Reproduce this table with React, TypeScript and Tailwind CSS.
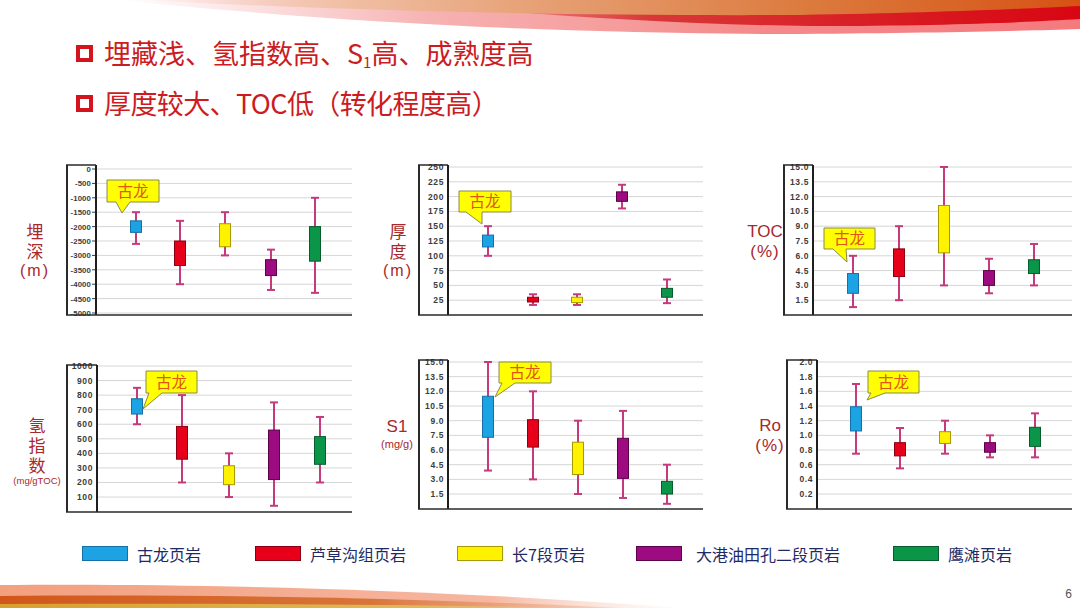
import React from "react";

type S = { x: number; wLo: number; wHi: number; bLo: number; bHi: number };
type Callout = { x1: number; x2: number; y1: number; y2: number; bL: number; bR: number; tx: number; ty: number };
type ChartDef = {
  frameL: number;
  innerX: number;
  gridEnd: number;
  frameT: number;
  frameB: number;
  max: number;
  min: number;
  pMax: number;
  pMin: number;
  ticks: { v: number; l: string }[];
  tickMarks?: boolean;
  series: S[];
  callout: Callout;
};

const FILLS = ["#1ca3e4", "#e8001a", "#fff200", "#9c0c80", "#0b9548"];
const STROKES = ["#1470a6", "#8a0012", "#a59a00", "#5c0049", "#065c2c"];

const range = (from: number, to: number, step: number) => {
  const out: number[] = [];
  for (let v = from; v <= to + 1e-9; v += step) out.push(Math.round(v * 100) / 100);
  return out;
};

const charts: ChartDef[] = [
  {
    frameL: 66, innerX: 96, gridEnd: 352, frameT: 5, frameB: 155, max: 0, min: -5000, pMax: 9, pMin: 153,
    ticks: range(0, 5000, 500).map((v) => ({ v: -v, l: v === 0 ? "0" : "-" + v })),
    tickMarks: true,
    series: [
      { x: 136, wLo: -2600, wHi: -1500, bLo: -2200, bHi: -1800 },
      { x: 180, wLo: -4000, wHi: -1800, bLo: -3350, bHi: -2500 },
      { x: 225, wLo: -3000, wHi: -1500, bLo: -2700, bHi: -1900 },
      { x: 271, wLo: -4200, wHi: -2800, bLo: -3700, bHi: -3150 },
      { x: 315, wLo: -4300, wHi: -1000, bLo: -3200, bHi: -2000 },
    ],
    callout: { x1: 107, x2: 159, y1: 20, y2: 42, bL: 116, bR: 130, tx: 122, ty: 53 },
  },
  {
    frameL: 58, innerX: 88, gridEnd: 343, frameT: 5, frameB: 155, max: 250, min: 0, pMax: 7, pMin: 155,
    ticks: range(25, 250, 25).map((v) => ({ v, l: String(v) })),
    series: [
      { x: 128, wLo: 100, wHi: 150, bLo: 115, bHi: 135 },
      { x: 173, wLo: 17, wHi: 35, bLo: 22, bHi: 30 },
      { x: 217, wLo: 17, wHi: 35, bLo: 21, bHi: 30 },
      { x: 262, wLo: 180, wHi: 220, bLo: 192, bHi: 208 },
      { x: 307, wLo: 20, wHi: 60, bLo: 30, bHi: 45 },
    ],
    callout: { x1: 99, x2: 151, y1: 31, y2: 52, bL: 106, bR: 122, tx: 122, ty: 64 },
  },
  {
    frameL: 63, innerX: 93, gridEnd: 352, frameT: 5, frameB: 155, max: 15, min: 0, pMax: 7, pMin: 155,
    ticks: range(1.5, 15, 1.5).map((v) => ({ v, l: v.toFixed(1) })),
    series: [
      { x: 133, wLo: 0.8, wHi: 6.0, bLo: 2.2, bHi: 4.2 },
      { x: 179, wLo: 1.5, wHi: 9.0, bLo: 3.9, bHi: 6.7 },
      { x: 224, wLo: 3.0, wHi: 15.0, bLo: 6.3, bHi: 11.1 },
      { x: 269, wLo: 2.2, wHi: 5.7, bLo: 3.0, bHi: 4.5 },
      { x: 314, wLo: 3.0, wHi: 7.2, bLo: 4.2, bHi: 5.6 },
    ],
    callout: { x1: 104, x2: 155, y1: 68, y2: 89, bL: 113, bR: 126, tx: 127, ty: 102 },
  },
  {
    frameL: 66, innerX: 97, gridEnd: 352, frameT: 10, frameB: 157, max: 1000, min: 0, pMax: 11, pMin: 156.6,
    ticks: range(100, 1000, 100).map((v) => ({ v, l: String(v) })),
    series: [
      { x: 137, wLo: 600, wHi: 850, bLo: 670, bHi: 775 },
      { x: 182, wLo: 200, wHi: 800, bLo: 360, bHi: 585 },
      { x: 229, wLo: 100, wHi: 400, bLo: 185, bHi: 315 },
      { x: 274, wLo: 40, wHi: 750, bLo: 220, bHi: 560 },
      { x: 320, wLo: 200, wHi: 650, bLo: 325, bHi: 515 },
    ],
    callout: { x1: 146, x2: 197, y1: 16, y2: 38, bL: 149, bR: 162, tx: 143, ty: 54 },
  },
  {
    frameL: 58, innerX: 88, gridEnd: 343, frameT: 5, frameB: 154, max: 15, min: 0, pMax: 7, pMin: 153.7,
    ticks: range(1.5, 15, 1.5).map((v) => ({ v, l: v.toFixed(1) })),
    series: [
      { x: 128, wLo: 3.9, wHi: 15.0, bLo: 7.3, bHi: 11.5 },
      { x: 173, wLo: 3.0, wHi: 12.0, bLo: 6.3, bHi: 9.1 },
      { x: 218, wLo: 1.5, wHi: 9.0, bLo: 3.5, bHi: 6.8 },
      { x: 263, wLo: 1.1, wHi: 10.0, bLo: 3.1, bHi: 7.2 },
      { x: 307, wLo: 0.5, wHi: 4.5, bLo: 1.5, bHi: 2.8 },
    ],
    callout: { x1: 139, x2: 191, y1: 7, y2: 28, bL: 142, bR: 155, tx: 135, ty: 42 },
  },
  {
    frameL: 66, innerX: 97, gridEnd: 352, frameT: 5, frameB: 154, max: 2, min: 0, pMax: 7, pMin: 153.7,
    ticks: range(0.2, 2.0, 0.2).map((v) => ({ v, l: v.toFixed(1) })),
    series: [
      { x: 136, wLo: 0.75, wHi: 1.7, bLo: 1.06, bHi: 1.39 },
      { x: 180, wLo: 0.55, wHi: 1.1, bLo: 0.72, bHi: 0.9 },
      { x: 225, wLo: 0.75, wHi: 1.2, bLo: 0.89, bHi: 1.05 },
      { x: 270, wLo: 0.7, wHi: 1.0, bLo: 0.77, bHi: 0.9 },
      { x: 315, wLo: 0.7, wHi: 1.3, bLo: 0.85, bHi: 1.11 },
    ],
    callout: { x1: 148, x2: 199, y1: 16, y2: 38, bL: 151, bR: 165, tx: 147, ty: 45 },
  },
];

function Chart({ d }: { d: ChartDef }) {
  const W = d.gridEnd - d.frameL + 2;
  const X = (x: number) => x - d.frameL;
  const Y = (v: number) => d.pMax + ((d.max - v) / (d.max - d.min)) * (d.pMin - d.pMax);
  const ix = X(d.innerX);
  const c = d.callout;
  const cp = `M${X(c.x1)},${c.y1} H${X(c.x2)} V${c.y2} H${X(c.bR)} L${X(c.tx)},${c.ty} L${X(c.bL)},${c.y2} H${X(c.x1)} Z`;
  return (
    <svg width={W} height={162} className="block shrink-0 overflow-visible">
      {d.ticks.map((t) => (
        <line key={"g" + t.l} x1={ix} x2={W - 2} y1={Y(t.v)} y2={Y(t.v)} stroke="#d6d6d6" strokeWidth={1} />
      ))}
      {d.ticks.map((t) => (
        <text
          key={"t" + t.l}
          x={d.tickMarks ? ix - 5 : ix - 4}
          y={Y(t.v) + 3}
          textAnchor="end"
          fontSize={d.tickMarks ? 7.8 : 8.5}
          fontWeight={700}
          letterSpacing={d.tickMarks ? 0.1 : 0.6}
          fill="#3c3c3c"
          fontFamily="'Liberation Sans', Arial, sans-serif"
        >
          {t.l}
        </text>
      ))}
      {d.tickMarks &&
        d.ticks.map((t) => (
          <line key={"m" + t.l} x1={ix - 4} x2={ix} y1={Y(t.v)} y2={Y(t.v)} stroke="#3c3c3c" strokeWidth={1} />
        ))}
      <line x1={1} x2={1} y1={d.frameT} y2={d.frameB} stroke="#2a2a2a" strokeWidth={2} />
      <line x1={0} x2={ix} y1={d.frameT} y2={d.frameT} stroke="#2a2a2a" strokeWidth={1.5} />
      <line x1={ix} x2={ix} y1={d.frameT} y2={d.frameB} stroke="#1e1e1e" strokeWidth={2} />
      <line x1={0} x2={W - 2} y1={d.frameB} y2={d.frameB} stroke="#2a2a2a" strokeWidth={1.5} />
      {d.series.map((s, i) => {
        const cx = X(s.x);
        return (
          <g key={i}>
            <line x1={cx} x2={cx} y1={Y(s.wHi)} y2={Y(s.wLo)} stroke="#c43a7c" strokeWidth={2} />
            <line x1={cx - 4} x2={cx + 4} y1={Y(s.wHi)} y2={Y(s.wHi)} stroke="#c43a7c" strokeWidth={2} />
            <line x1={cx - 4} x2={cx + 4} y1={Y(s.wLo)} y2={Y(s.wLo)} stroke="#c43a7c" strokeWidth={2} />
            <rect
              x={cx - 5.5}
              y={Y(s.bHi)}
              width={11}
              height={Y(s.bLo) - Y(s.bHi)}
              fill={FILLS[i]}
              stroke={STROKES[i]}
              strokeWidth={1}
            />
          </g>
        );
      })}
      <path d={cp} fill="#ffff00" stroke="#8a8a4a" strokeWidth={1} />
      <text
        x={(X(c.x1) + X(c.x2)) / 2}
        y={(c.y1 + c.y2) / 2 + 5.5}
        textAnchor="middle"
        fontSize={15.5}
        fill="#e2561a"
        fontFamily="'Noto Sans CJK SC', sans-serif"
      >
        古龙
      </text>
    </svg>
  );
}

function Cell({ d, label, ml, mt }: { d: ChartDef; label: React.ReactNode; ml: string; mt: string }) {
  return (
    <div className="flex w-[360px]">
      <div className="shrink-0" style={{ width: d.frameL }}>
        <div className={`flex w-[60px] flex-col items-center text-center text-[#a8282c] ${ml} ${mt}`}>{label}</div>
      </div>
      <Chart d={d} />
    </div>
  );
}

const legend = [
  { c: 0, t: "古龙页岩", w: "w-[173px]", gap: "mr-[9px]" },
  { c: 1, t: "芦草沟组页岩", w: "w-[202px]", gap: "mr-[9px]" },
  { c: 2, t: "长7段页岩", w: "w-[179px]", gap: "mr-[9px]" },
  { c: 3, t: "大港油田孔二段页岩", w: "w-[257px]", gap: "mr-[14px]" },
  { c: 4, t: "鹰滩页岩", w: "w-[160px]", gap: "mr-[9px]" },
];

export default function App() {
  return (
    <div className="relative w-[1080px] h-[608px] overflow-hidden bg-white font-['Noto_Sans_CJK_SC','Liberation_Sans',sans-serif]">
      {/* top decorative swoosh */}
      <svg className="absolute left-0 top-0" width={1080} height={40}>
        <defs>
          <linearGradient id="pinkG" x1="0" x2="1080" y1="0" y2="0" gradientUnits="userSpaceOnUse">
            <stop offset="0.11" stopColor="#f7b0b0" stopOpacity="0" />
            <stop offset="0.4" stopColor="#f5a4a4" stopOpacity="0.85" />
            <stop offset="0.7" stopColor="#f58a8a" />
            <stop offset="1" stopColor="#f47a7e" />
          </linearGradient>
          <linearGradient id="redG" x1="0" x2="1080" y1="0" y2="0" gradientUnits="userSpaceOnUse">
            <stop offset="0.38" stopColor="#e05050" stopOpacity="0" />
            <stop offset="0.6" stopColor="#d83838" />
            <stop offset="1" stopColor="#d80612" />
          </linearGradient>
          <linearGradient id="orG" x1="0" x2="1080" y1="0" y2="0" gradientUnits="userSpaceOnUse">
            <stop offset="0.13" stopColor="#f5d0c0" stopOpacity="0" />
            <stop offset="0.3" stopColor="#f2c2aa" />
            <stop offset="0.5" stopColor="#e6a074" />
            <stop offset="0.75" stopColor="#dc7a3e" />
            <stop offset="1" stopColor="#d65214" />
          </linearGradient>
        </defs>
        <path d="M120,0 C330,22 560,34 800,34 C930,33 1020,31 1080,29 L1080,0 Z" fill="url(#pinkG)" />
        <path d="M380,0 C500,12 650,24 810,26 C950,26 1030,22 1080,19 L1080,0 Z" fill="url(#redG)" />
        <path d="M140,0 C350,11 560,16 800,15 C930,13 1020,9 1080,6 L1080,0 Z" fill="url(#orG)" />
      </svg>

      {/* bottom decorative swoosh */}
      <svg className="absolute left-0 bottom-0" width={700} height={30}>
        <defs>
          <linearGradient id="bPink" x1="0" x2="700" y1="0" y2="0" gradientUnits="userSpaceOnUse">
            <stop offset="0" stopColor="#f3a07e" />
            <stop offset="0.7" stopColor="#f6b6a0" />
            <stop offset="1" stopColor="#fbe0d6" stopOpacity="0" />
          </linearGradient>
          <linearGradient id="bOr" x1="0" x2="620" y1="0" y2="0" gradientUnits="userSpaceOnUse">
            <stop offset="0" stopColor="#d2561a" />
            <stop offset="0.6" stopColor="#d8753a" />
            <stop offset="1" stopColor="#f0b090" stopOpacity="0.3" />
          </linearGradient>
          <linearGradient id="bYe" x1="0" x2="580" y1="0" y2="0" gradientUnits="userSpaceOnUse">
            <stop offset="0" stopColor="#d8a030" />
            <stop offset="0.7" stopColor="#e0b854" />
            <stop offset="1" stopColor="#ecd090" stopOpacity="0.4" />
          </linearGradient>
        </defs>
        <path d="M0,7 C200,5 450,12 680,30 L0,30 Z" fill="url(#bPink)" />
        <path d="M0,18 C200,16 420,20 620,30 L0,30 Z" fill="url(#bOr)" />
        <path d="M0,26 C200,25 400,26 580,30 L0,30 Z" fill="url(#bYe)" />
      </svg>

      <div className="relative flex flex-col">
        {/* header bullets */}
        <div className="flex flex-col gap-[22px] pt-[39px] pl-[76px] text-[#cc1b22]">
          <div className="flex h-[28px] items-center">
            <span className="mr-[11px] h-[17px] w-[17px] shrink-0 border-[4px] border-[#d3141c]" />
            <span className="whitespace-nowrap text-[27px] leading-[28px]">
              埋藏浅、氢指数高、S<sub className="text-[15px]">1</sub>高、成熟度高
            </span>
          </div>
          <div className="flex h-[28px] items-center">
            <span className="mr-[11px] h-[17px] w-[17px] shrink-0 border-[4px] border-[#d3141c]" />
            <span className="whitespace-nowrap text-[27px] leading-[28px] tracking-[-0.6px]">
              厚度较大、TOC低（转化程度高）
            </span>
          </div>
        </div>

        {/* charts */}
        <div className="mt-[43px] flex h-[195px]">
          <Cell
            d={charts[0]}
            ml="ml-[5px]"
            mt="mt-[63px]"
            label={
              <>
                <div className="text-[17px] leading-[17px] tracking-[3px] [writing-mode:vertical-rl]">埋深</div>
                <div className="-mt-[2px] font-['Liberation_Sans',sans-serif] text-[16px] leading-[20px] tracking-[2px]">(m)</div>
              </>
            }
          />
          <Cell
            d={charts[1]}
            ml="ml-[8px]"
            mt="mt-[63px]"
            label={
              <>
                <div className="text-[17px] leading-[17px] tracking-[3px] [writing-mode:vertical-rl]">厚度</div>
                <div className="-mt-[2px] font-['Liberation_Sans',sans-serif] text-[16px] leading-[20px] tracking-[2px]">(m)</div>
              </>
            }
          />
          <Cell
            d={charts[2]}
            ml="ml-[15px]"
            mt="mt-[62px]"
            label={
              <div className="font-['Liberation_Sans',sans-serif] text-[17px] leading-[20px]">
                <div>TOC</div>
                <div className="tracking-[1px]">(%)</div>
              </div>
            }
          />
        </div>
        <div className="flex h-[160px]">
          <Cell
            d={charts[3]}
            ml="ml-[7px]"
            mt="mt-[62px]"
            label={
              <>
                <div className="text-[17px] leading-[17px] tracking-[3px] [writing-mode:vertical-rl]">氢指数</div>
                <div className="-mt-[2px] font-['Liberation_Sans',sans-serif] text-[9.5px] leading-[12px]">(mg/gTOC)</div>
              </>
            }
          />
          <Cell
            d={charts[4]}
            ml="ml-[7px]"
            mt="mt-[62px]"
            label={
              <div className="font-['Liberation_Sans',sans-serif]">
                <div className="text-[17px] leading-[20px]">S1</div>
                <div className="text-[11px] leading-[14px]">(mg/g)</div>
              </div>
            }
          />
          <Cell
            d={charts[5]}
            ml="ml-[20px]"
            mt="mt-[61px]"
            label={
              <div className="font-['Liberation_Sans',sans-serif] text-[17px] leading-[20px]">
                <div>Ro</div>
                <div className="tracking-[1px]">(%)</div>
              </div>
            }
          />
        </div>

        {/* legend */}
        <div className="mt-[31px] flex h-[15px] items-center pl-[82px]">
          {legend.map((it) => (
            <div key={it.t} className={`flex shrink-0 items-center ${it.w}`}>
              <span
                className={`h-[15px] w-[46px] shrink-0 border ${it.gap}`}
                style={{ backgroundColor: FILLS[it.c], borderColor: STROKES[it.c] }}
              />
              <span className="whitespace-nowrap text-[16px] leading-[18px] text-[#1e2a66]">{it.t}</span>
            </div>
          ))}
        </div>

        {/* page number */}
        <div className="mt-[26px] flex justify-end pr-[8px]">
          <span className="font-['Liberation_Sans',sans-serif] text-[12px] leading-[14px] text-[#555]">6</span>
        </div>
      </div>
    </div>
  );
}
